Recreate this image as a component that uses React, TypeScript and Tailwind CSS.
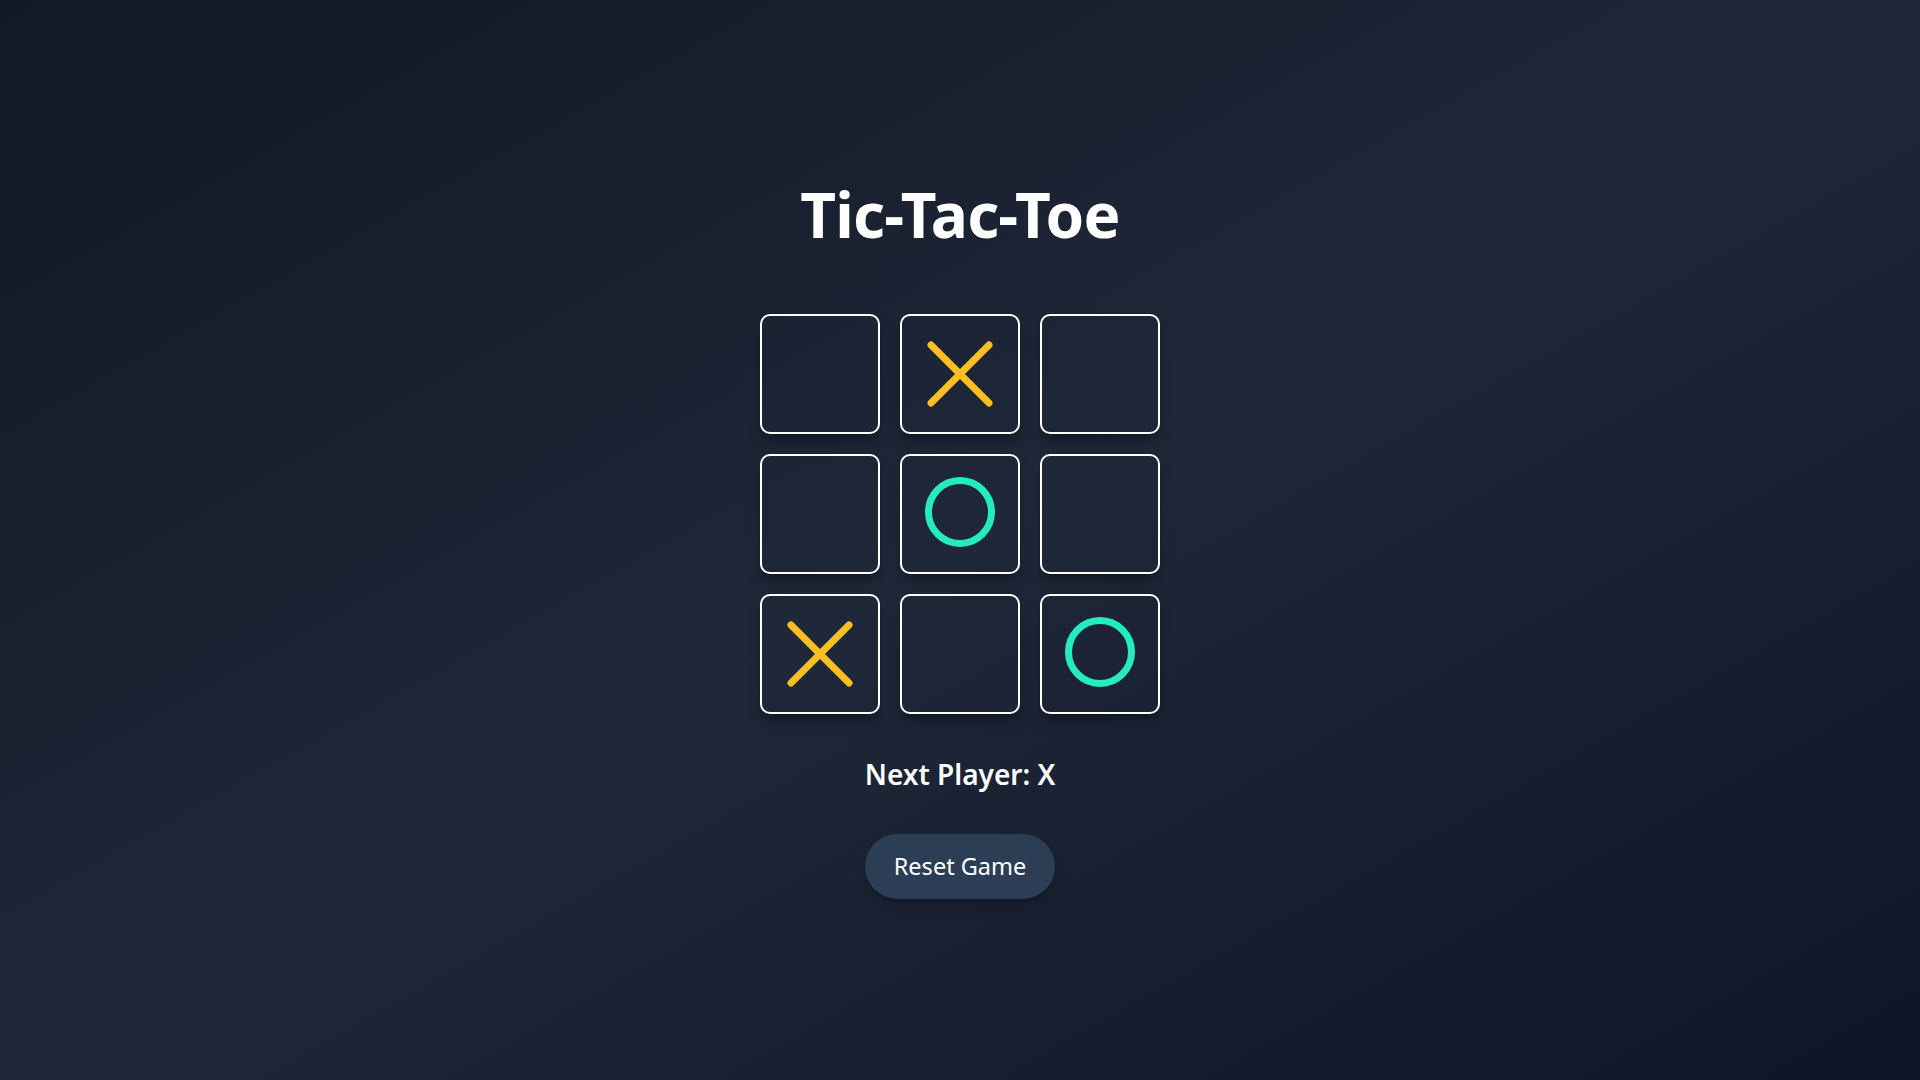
import React from "react";

type Mark = "X" | "O" | null;

const board: Mark[] = [null, "X", null, null, "O", null, "X", null, "O"];

function XMark() {
  return (
    <svg width="116" height="116" viewBox="2 2 116 116" className="block">
      <line x1="31" y1="31" x2="89" y2="89" stroke="#fbbf24" strokeWidth="7" strokeLinecap="round" />
      <line x1="89" y1="31" x2="31" y2="89" stroke="#fbbf24" strokeWidth="7" strokeLinecap="round" />
    </svg>
  );
}

function OMark() {
  return (
    <svg width="116" height="116" viewBox="2 2 116 116" className="block">
      <circle cx="60" cy="58" r="31.5" fill="none" stroke="#25ebc3" strokeWidth="7" />
    </svg>
  );
}

export default function App() {
  return (
    <div
      className="min-h-screen w-full bg-gradient-to-br from-[#111827] via-[#1f2838] to-[#0f1526] flex flex-col items-center pt-[183px] text-white"
      style={{ fontFamily: '"Noto Sans", "Open Sans", sans-serif' }}
    >
      <h1 className="text-[62px] leading-none font-bold tracking-[-0.8px]">Tic-Tac-Toe</h1>
      <div className="mt-[69px] grid grid-cols-[repeat(3,120px)] gap-[20px]">
        {board.map((m, i) => (
          <div
            key={i}
            className="w-[120px] h-[120px] rounded-[10px] border-2 border-white overflow-hidden shadow-lg shadow-black/30"
          >
            {m === "X" ? <XMark /> : m === "O" ? <OMark /> : null}
          </div>
        ))}
      </div>
      <div className="mt-[46px] text-[28px] leading-none font-semibold">Next Player: X</div>
      <button className="mt-[46px] h-[65px] w-[190px] rounded-full bg-[#2c3e55] text-[23.5px] leading-none flex items-center justify-center shadow-lg shadow-black/20">
        Reset Game
      </button>
    </div>
  );
}
